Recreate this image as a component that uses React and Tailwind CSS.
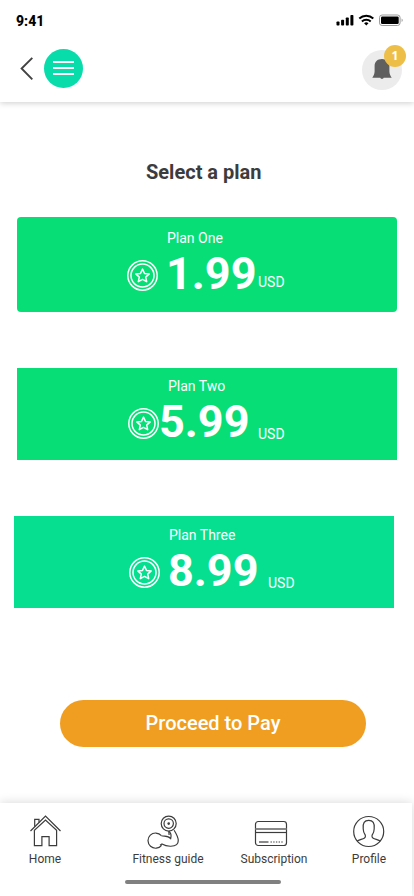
import React from "react";

function CoinIcon({ className }) {
  return (
    <svg className={`h-[31px] w-[31px] shrink-0 ${className}`} viewBox="0 0 31 31" fill="none" stroke="#fff">
      <circle cx="15.5" cy="15.5" r="14.7" strokeWidth="1.5" />
      <circle cx="15.5" cy="15.5" r="11.5" strokeWidth="1.5" />
      <path d="M15.5 9.1l2 4.300 4.700.5-3.500 3.200 1 4.600-4.200-2.300-4.200 2.300 1-4.600-3.500-3.200 4.700-.5z" strokeWidth="1.5" strokeLinejoin="round" />
    </svg>
  );
}

function PlanCard({ name, price, card, label, coin, amount, unit }) {
  return (
    <section className={`w-[380px] text-white ${card}`}>
      <p className={`text-sm leading-4 ${label}`}>{name}</p>
      <div className="mt-1 flex h-[46px] items-start">
        <CoinIcon className={`mt-2.5 ${coin}`} />
        <span className={`shrink-0 whitespace-nowrap text-[45px] leading-[48px] font-bold ${amount}`}>{price}</span>
        <span className={`text-sm leading-4 ${unit}`}>USD</span>
      </div>
    </section>
  );
}

function StatusBar() {
  return (
    <div className="flex h-10 items-start pt-[13px] pl-4">
      <span className="text-sm leading-4 font-extrabold text-black">9:41</span>
      <svg className="mt-px ml-auto h-3 w-[68px]" viewBox="0 0 68 12">
        <rect x="0.5" y="7.5" width="3" height="4" rx="0.8" />
        <rect x="5.1" y="5.7" width="3" height="5.8" rx="0.8" />
        <rect x="9.8" y="3.4" width="3" height="8.1" rx="0.8" />
        <rect x="14.4" y="1" width="3" height="10.5" rx="0.8" />
        <g fill="none" stroke="#000" strokeWidth="2">
          <path d="M23.3 4.6a10.2 10.2 0 0 1 14 0" />
          <path d="M25.9 7.5a6.4 6.4 0 0 1 8.8 0" />
        </g>
        <path d="M30.3 11.4l-2.2-2.2a3.2 3.2 0 0 1 4.4 0z" />
        <rect x="43.5" y="1" width="20.6" height="10.5" rx="2.6" fill="none" stroke="#9b9b9b" />
        <rect x="45" y="2.5" width="17.7" height="7.5" rx="1.2" />
        <path d="M65.6 4.6c1.5.5 1.5 2.9 0 3.4z" fill="#999" />
      </svg>
      <div className="w-[10px]" />
    </div>
  );
}

function Header() {
  return (
    <header className="h-[102px] bg-white shadow-[0_1px_6px_rgba(0,0,0,0.2)]">
      <StatusBar />
      <div className="flex items-start pt-[9px] pr-3 pl-5">
        <svg className="mt-2 h-[23px] w-[13px]" viewBox="0 0 13 23" fill="none" stroke="#424242" strokeWidth="1.9">
          <path d="M12.3.8L1.6 11.5l10.7 10.8" />
        </svg>
        <button className="ml-[11px] flex h-[39px] w-[39px] flex-col items-center justify-center gap-1 rounded-full bg-[#07dcaa] pb-px">
          <span className="h-0.5 w-[21px] bg-white" />
          <span className="h-0.5 w-[21px] bg-white" />
          <span className="h-0.5 w-[21px] bg-white" />
        </button>
        <div className="relative mt-px ml-auto flex h-10 w-10 justify-center rounded-full bg-[#ececec] pt-[9px]">
          <svg className="h-5 w-5" viewBox="0 0 20 20" fill="#5f5f5f">
            <path d="M10 0C5.300 0 2.600 2.800 2.600 7v5.600C2.500 15 1.700 17 .3 18.800h8c.2.700.9 1.200 1.700 1.200s1.500-.5 1.700-1.200h8c-1.400-1.800-2.200-3.800-2.300-6.200V7c0-4.200-2.700-7-7.400-7z" />
          </svg>
          <span className="absolute -top-[5px] -right-1 h-[22px] w-[22px] rounded-full bg-[#eebf48] text-center font-['Open_Sans',sans-serif] text-[12px] leading-[22px] font-bold text-white">1</span>
        </div>
      </div>
    </header>
  );
}

function HomeIcon() {
  return (
    <svg className="h-9 w-9" viewBox="0 0 36 36" fill="none" stroke="#3c3c3c" strokeWidth="1.2">
      <path d="M3.500 18L18.500 3l15 15" />
      <path d="M7.400 17.300v15.300h7.500v-9h7.200v9h7.500V17.300L18.500 7z" />
      <path d="M7.700 13.800V6.300h4.300v3.200" />
    </svg>
  );
}

function FitnessIcon() {
  return (
    <svg className="h-9 w-9 -translate-x-[5px]" viewBox="0 0 36 36" fill="none" stroke="#3c3c3c" strokeWidth="1.2">
      <circle cx="23.7" cy="10.6" r="7.5" />
      <circle cx="23.7" cy="10.6" r="4.7" />
      <circle cx="23.7" cy="10.6" r="1.3" fill="#3c3c3c" stroke="none" />
      <path d="M16.400 22.700a7.600 7.600 0 1 0 .2 9.600" />
      <path d="M15 32.200l2-1.300c5 3 12 3 14.600.7 2.700-2.400 1.800-7.600-2.500-14.300" />
      <path d="M16.400 22.700c3 .9 6.600-.5 9.300 2.800.7-2.700.9-5.300-1.900-7.300" />
      <path d="M23.800 18.200l.3 3.800" />
    </svg>
  );
}

function CardIcon() {
  return (
    <svg className="h-9 w-9 -translate-x-[3px]" viewBox="0 0 36 36" fill="none" stroke="#3c3c3c" strokeWidth="1.2">
      <rect x="2.500" y="8.500" width="31" height="24" rx="2.800" />
      <path d="M2.500 16h31" stroke="#888" strokeWidth="2" />
      <path d="M2.500 19.500h31" />
      <path d="M6 29h9.500" />
      <path d="M17.500 29h13" strokeDasharray="1.400 1.300" />
    </svg>
  );
}

function ProfileIcon() {
  return (
    <svg className="h-9 w-9" viewBox="0 0 36 36" fill="none" stroke="#3c3c3c" strokeWidth="1.2">
      <circle cx="17.700" cy="18.500" r="15" />
      <path d="M5.900 28.200c2-1.400 5.700-2 7.300-3 1.600-1 1.500-2.900.4-4.300-1.200-1.500-1.200-3.200-1.400-5.400-.5-5.600 1.200-8.200 5.500-8.200s6 2.600 5.500 8.200c-.2 2.200-.2 3.900-1.400 5.400-1.100 1.400-1.200 3.300.4 4.300 1.600 1 5.300 1.600 7.300 3" />
    </svg>
  );
}

function NavItem({ icon, text, className }) {
  return (
    <a className={`flex shrink-0 flex-col items-center ${className}`}>
      {icon}
      <span className="mt-[2px] text-xs leading-4 whitespace-nowrap">{text}</span>
    </a>
  );
}

export default function App() {
  return (
    <div className="flex h-[896px] w-[414px] flex-col overflow-hidden bg-white font-[Roboto,sans-serif]">
      <Header />
      <main className="flex grow flex-col">
        <h1 className="mt-[58px] pl-[146px] text-xl leading-6 font-bold text-[#3c3c3c]">Select a plan</h1>
        <PlanCard name="Plan One" price="1.99" card="mt-[33px] ml-[17px] h-[95px] rounded bg-[#07df76] pt-[13px]" label="pl-[150px]" coin="ml-[110px]" amount="ml-2 w-[92px]" unit="mt-6" />
        <PlanCard name="Plan Two" price="5.99" card="mt-14 ml-[17px] h-[92px] bg-[#07df76] pt-2.5" label="pl-[151px]" coin="ml-[111px]" amount="w-[99px]" unit="mt-7" />
        <PlanCard name="Plan Three" price="8.99" card="mt-14 ml-3.5 h-[92px] bg-[#07df90] pt-[11px]" label="pl-[155px]" coin="ml-[115px]" amount="ml-2 w-[100px]" unit="mt-7" />
        <button className="mt-[92px] ml-[60px] h-[47px] w-[306px] rounded-full bg-[#f09e22] pb-0.5 text-xl leading-6 font-medium text-white">Proceed to Pay</button>
      </main>
      <footer className="h-[93px] w-[412px] bg-white text-[#3c3c3c] shadow-[0_0_10px_rgba(0,0,0,0.16)]">
        <nav className="flex pt-[10px]">
          <NavItem icon={<HomeIcon />} text="Home" className="ml-[5px] w-20" />
          <NavItem icon={<FitnessIcon />} text="Fitness guide" className="ml-[38px] w-[90px]" />
          <NavItem icon={<CardIcon />} text="Subscription" className="ml-4 w-[90px]" />
          <NavItem icon={<ProfileIcon />} text="Profile" className="ml-2.5 w-20" />
        </nav>
        <div className="mt-[13px] ml-[125px] h-1 w-[156px] rounded-full bg-[#808080]" />
      </footer>
    </div>
  );
}
